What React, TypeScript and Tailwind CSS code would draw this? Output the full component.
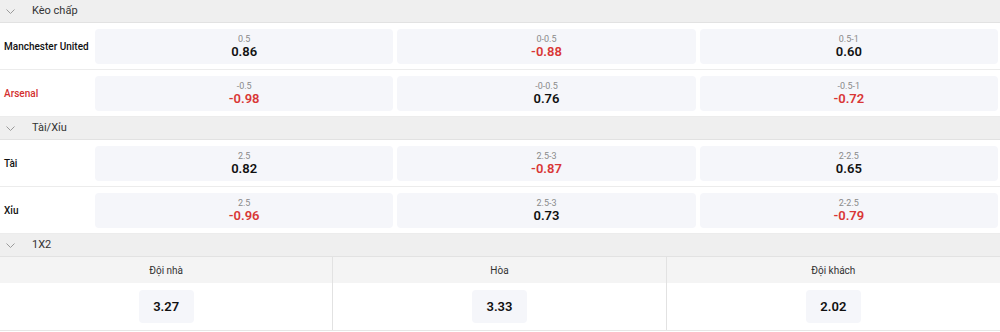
import React from "react";

type Odd = { line: string; value: string };

const handicap = [
  {
    team: "Manchester United",
    red: false,
    odds: [
      { line: "0.5", value: "0.86" },
      { line: "0-0.5", value: "-0.88" },
      { line: "0.5-1", value: "0.60" },
    ],
  },
  {
    team: "Arsenal",
    red: true,
    odds: [
      { line: "-0.5", value: "-0.98" },
      { line: "-0-0.5", value: "0.76" },
      { line: "-0.5-1", value: "-0.72" },
    ],
  },
];

const overUnder = [
  {
    team: "Tài",
    red: false,
    odds: [
      { line: "2.5", value: "0.82" },
      { line: "2.5-3", value: "-0.87" },
      { line: "2-2.5", value: "0.65" },
    ],
  },
  {
    team: "Xỉu",
    red: false,
    odds: [
      { line: "2.5", value: "-0.96" },
      { line: "2.5-3", value: "0.73" },
      { line: "2-2.5", value: "-0.79" },
    ],
  },
];

const oneXTwo = [
  { label: "Đội nhà", value: "3.27" },
  { label: "Hòa", value: "3.33" },
  { label: "Đội khách", value: "2.02" },
];

function SectionHeader({ title }: { title: string }) {
  return (
    <div className="flex h-[23px] items-center bg-[#efefef] border-b border-[#e2e2e2]">
      <svg width="9" height="5" viewBox="0 0 9 5" className="ml-[6px] mr-[17px]" fill="none">
        <path d="M0.5 0.5 L4.5 4.5 L8.5 0.5" stroke="#9a9a9a" strokeWidth="1" />
      </svg>
      <span className="text-[11px] text-[#333]">{title}</span>
    </div>
  );
}

function OddBox({ odd }: { odd: Odd }) {
  const neg = odd.value.startsWith("-");
  return (
    <div className="flex-1 h-[35px] rounded-[4px] bg-[#f5f6fa] flex flex-col items-center justify-center">
      <span className="text-[9px] leading-[10px] text-[#8a8a8a]">{odd.line}</span>
      <span className={`text-[13px] leading-[15px] font-semibold ${neg ? "text-[#d93636]" : "text-[#111]"}`}>
        {odd.value}
      </span>
    </div>
  );
}

function OddsRow({ team, red, odds }: { team: string; red: boolean; odds: Odd[] }) {
  return (
    <div className="flex h-[47px] items-center border-b border-[#ececec] pr-[2px]">
      <div
        className={`w-[95px] pl-[4px] whitespace-nowrap text-[10px] font-medium ${red ? "text-[#d32f2f]" : "text-[#111]"}`}
      >
        {team}
      </div>
      <div className="flex flex-1 gap-[4px]">
        {odds.map((o, i) => (
          <OddBox key={i} odd={o} />
        ))}
      </div>
    </div>
  );
}

export default function App() {
  return (
    <div className="w-[1000px] h-[332px] bg-white font-['Roboto',sans-serif] overflow-hidden">
      <SectionHeader title="Kèo chấp" />
      {handicap.map((r) => (
        <OddsRow key={r.team} {...r} />
      ))}
      <SectionHeader title="Tài/Xỉu" />
      {overUnder.map((r) => (
        <OddsRow key={r.team} {...r} />
      ))}
      <SectionHeader title="1X2" />
      <div className="grid grid-cols-3 border-b border-[#e6e6e6]">
        {oneXTwo.map((c, i) => (
          <div key={c.label} className={`flex flex-col ${i < 2 ? "border-r border-[#e2e2e2]" : ""}`}>
            <div className="h-[26px] bg-[#f4f4f4] flex items-center justify-center text-[10px] text-[#333]">
              {c.label}
            </div>
            <div className="h-[47px] flex items-center justify-center">
              <div className="w-[55px] h-[33px] rounded-[4px] bg-[#f5f6fa] flex items-center justify-center text-[13px] font-semibold text-[#111]">
                {c.value}
              </div>
            </div>
          </div>
        ))}
      </div>
    </div>
  );
}
